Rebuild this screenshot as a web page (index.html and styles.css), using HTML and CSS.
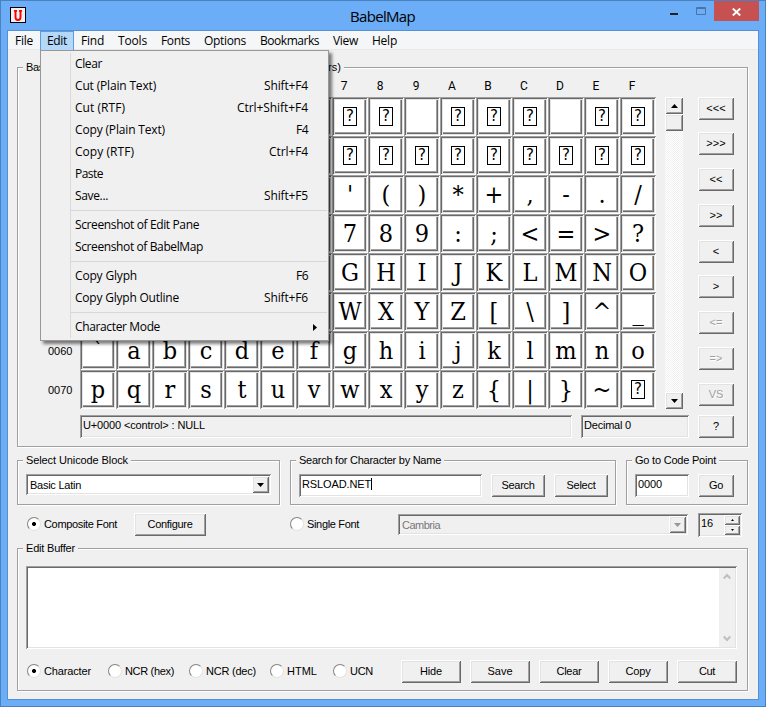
FILE: index.html
```html
<!DOCTYPE html>
<html lang="en">
<head>
<meta charset="utf-8">
<title>BabelMap</title>
<link rel="stylesheet" href="styles.css">
</head>
<body>
<div class="window">
  <header class="titlebar">
    <span class="app-icon"><svg width="10" height="11" viewBox="0 0 10 11"><path d="M1 .9H4M6 .9h3M2.500 1v6c0 2 1 3 2.500 3s2.500-1 2.500-3V1" fill="none" stroke="#f00" stroke-width="1.900"/></svg></span>
    <h1><span data-w="65">BabelMap</span></h1>
    <div class="controls">
      <svg width="44" height="20" viewBox="0 0 44 20"><path d="M0 12h8v2H0z" fill="#222"/><path d="M26.5 6.5h9v7h-9zM26 7.5h10" fill="none" stroke="#4a74a6"/></svg>
      <span class="close"><svg width="9" height="8" viewBox="0 0 9 8"><path d="M.8.5 8.2 7.5M8.2.5.8 7.5" stroke="#fff" stroke-width="1.9"/></svg></span>
    </div>
  </header>
  <main class="client">
    <nav class="menubar">
      <span data-w="18">File</span><span class="open" data-w="20">Edit</span><span data-w="23">Find</span><span data-w="29">Tools</span><span data-w="29">Fonts</span><span data-w="42">Options</span><span data-w="59">Bookmarks</span><span data-w="25">View</span><span data-w="25">Help</span>
    </nav>
    <div class="menu">
      <div><b data-w="27">Clear</b></div>
      <div><b data-w="81">Cut (Plain Text)</b><i data-w="44">Shift+F4</i></div>
      <div><b data-w="50">Cut (RTF)</b><i data-w="71">Ctrl+Shift+F4</i></div>
      <div><b data-w="90">Copy (Plain Text)</b><i data-w="12">F4</i></div>
      <div><b data-w="59">Copy (RTF)</b><i data-w="39">Ctrl+F4</i></div>
      <div><b data-w="28">Paste</b></div>
      <div><b data-w="33">Save...</b><i data-w="44">Shift+F5</i></div>
      <hr>
      <div><b data-w="124">Screenshot of Edit Pane</b></div>
      <div><b data-w="128">Screenshot of BabelMap</b></div>
      <hr>
      <div><b data-w="62">Copy Glyph</b><i data-w="12">F6</i></div>
      <div><b data-w="104">Copy Glyph Outline</b><i data-w="44">Shift+F6</i></div>
      <hr>
      <div><b data-w="85">Character Mode</b><svg class="sub" width="4" height="7" viewBox="0 0 4 7"><path d="M0 0 4 3.5 0 7z"/></svg></div>
    </div>

    <section class="group map">
      <span class="legend split"><span data-w="18">Bas</span><span data-w="13">rs)</span></span>
      <div class="heads"></div>
      <div class="map-body">
        <div class="map-left">
          <div class="board">
            <div class="rows"></div>
            <div class="cells"></div>
            <div class="scroll">
              <span class="sbtn"><svg width="7" height="4" viewBox="0 0 7 4"><path d="M0 4 3.5 0 7 4z"/></svg></span>
              <span class="thumb"></span>
              <span class="sbtn end"><svg width="7" height="4" viewBox="0 0 7 4"><path d="M0 0 3.5 4 7 0z"/></svg></span>
            </div>
          </div>
          <div class="status">
            <div class="sunk name"><span data-w="122">U+0000 &lt;control&gt; : NULL</span></div>
            <div class="sunk dec"><span data-w="47">Decimal 0</span></div>
          </div>
        </div>
        <div class="side">
          <button>&lt;&lt;&lt;</button><button>&gt;&gt;&gt;</button><button>&lt;&lt;</button><button>&gt;&gt;</button><button>&lt;</button><button>&gt;</button><button class="off">&lt;=</button><button class="off">=&gt;</button><button class="off">VS</button><button>?</button>
        </div>
      </div>
    </section>

    <div class="mid">
      <section class="group block">
        <span class="legend"><span data-w="102">Select Unicode Block</span></span>
        <div class="sunk combo"><span data-w="51">Basic Latin</span><span class="sbtn"><svg width="7" height="4" viewBox="0 0 7 4"><path d="M0 0 3.5 4 7 0z"/></svg></span></div>
      </section>
      <section class="group search">
        <span class="legend"><span data-w="142">Search for Character by Name</span></span>
        <div class="line">
          <div class="sunk field"><span class="caret" data-w="69">RSLOAD.NET</span></div>
          <button class="w54"><span data-w="33">Search</span></button>
          <button class="w54"><span data-w="29">Select</span></button>
        </div>
      </section>
      <section class="group goto">
        <span class="legend"><span data-w="81">Go to Code Point</span></span>
        <div class="line">
          <div class="sunk field"><span data-w="24">0000</span></div>
          <button class="w36"><span data-w="14">Go</span></button>
        </div>
      </section>
    </div>

    <div class="fonts">
      <label class="radio on f1"><span data-w="73">Composite Font</span></label>
      <button class="w72"><span data-w="45">Configure</span></button>
      <label class="radio f2"><span data-w="52">Single Font</span></label>
      <div class="sunk combo dis"><span data-w="38">Cambria</span><span class="sbtn"><svg width="7" height="4" viewBox="0 0 7 4"><path d="M0 0 3.5 4 7 0z"/></svg></span></div>
      <div class="sunk spin"><span data-w="12">16</span><div><span class="sbtn"><svg width="3" height="2" viewBox="0 0 3 2"><path d="M0 2 1.5 0 3 2z"/></svg></span><span class="sbtn"><svg width="3" height="2" viewBox="0 0 3 2"><path d="M0 0 1.5 2 3 0z"/></svg></span></div></div>
    </div>

    <section class="group edit">
      <span class="legend"><span data-w="49">Edit Buffer</span></span>
      <div class="sunk area">
        <div class="vbar">
          <svg width="8" height="7" viewBox="0 0 8 7"><path d="M.7 5.5 4 2l3.300 3.500" fill="none" stroke="#bfbfbf" stroke-width="2.200"/></svg>
          <svg width="8" height="7" viewBox="0 0 8 7"><path d="M.7 1.500 4 5l3.300-3.500" fill="none" stroke="#bfbfbf" stroke-width="2.200"/></svg>
        </div>
      </div>
      <div class="modes">
        <div class="radios">
          <label class="radio on"><span data-w="47">Character</span></label>
          <label class="radio"><span data-w="49">NCR (hex)</span></label>
          <label class="radio"><span data-w="50">NCR (dec)</span></label>
          <label class="radio"><span data-w="30">HTML</span></label>
          <label class="radio"><span data-w="23">UCN</span></label>
        </div>
        <button><span data-w="22">Hide</span></button><button><span data-w="25">Save</span></button><button><span data-w="25">Clear</span></button><button><span data-w="25">Copy</span></button><button><span data-w="16">Cut</span></button>
      </div>
    </section>
  </main>
</div>
<script src="main.js"></script>
</body>
</html>
```
FILE: styles.css
```css
* { box-sizing: border-box; }
body { margin: 0; font: 11px/13px "Liberation Sans", Arial, sans-serif; color: #000; }
svg { display: block; }
[data-w] { white-space: pre; }

.window { width: 766px; height: 707px; background: #6badf6; border: 1px solid #4a82c0; padding: 0 6px 6px; }
.titlebar { height: 29px; display: flex; position: relative; }
.app-icon { width: 16px; height: 16px; margin: 6px 0 0 3px; border: 1px solid #000; background: #f0f0f0; display: grid; place-items: center; }
h1 { margin: 0; width: 731px; text-align: center; font: 15px/20px "Open Sans", sans-serif; position: absolute; left: 10px; top: 5px; }
.controls { margin-left: auto; display: flex; }
.close { width: 45px; height: 20px; background: #c75050; display: grid; place-items: center; padding-top: 1px; }

.client { width: 752px; height: 670px; background: #f0f0f0; border: 1px solid #5590d4; position: relative; }
.menubar { height: 19px; background: #f5f6f7; border-bottom: 1px solid #e8e8e8; display: flex; font: 12px/18px "Open Sans", sans-serif; }
.menubar > span { padding: 0 7px; height: 19px; line-height: 20px; }
.menubar .open { padding: 0 6px; background: #b5d7f8; border: 1px solid #5c9ddb; line-height: 18px; height: 20px; border-bottom-color: #999; }
.menu { position: absolute; left: 32px; top: 19px; width: 289px; height: 291px; background: linear-gradient(90deg, transparent 29px, #d9d9d9 29px 30px, transparent 30px) no-repeat 0 2px / 100% 285px #f0f0f0; border: 1px solid #989898; padding: 2px 0; font: 12px/22px "Open Sans", sans-serif; box-shadow: 3px 3px 3px rgba(0,0,0,.5); z-index: 2; }
.menu div { height: 22px; padding: 0 20px 0 34px; display: flex; justify-content: space-between; }
.menu b, .menu i { font: inherit; }
.menu hr { height: 1px; border: 0; margin: 3px 1px 3px 30px; background: #d7d7d7; }
.menu .sub { margin: 8px -9px 0 0; }

.group { border: 1px solid #a0a0a0; box-shadow: 1px 1px #fff, inset 1px 1px #fff; }
.legend { display: block; width: max-content; height: 15px; line-height: 15px; margin: -8px 0 0 5px; padding: 0 3px; background: #f0f0f0; }
.legend.split { display: flex; justify-content: space-between; width: 321px; }
.sunk { background: #fff; box-shadow: inset 1px 1px #a0a0a0, inset -1px -1px #fff, inset 2px 2px #696969, inset -2px -2px #e3e3e3; }
button, .sbtn, .thumb { display: grid; place-items: center; padding: 0; border: 0; background: #f0f0f0; font: inherit; color: #000; box-shadow: inset 1px 1px #fff, inset -1px -1px #696969, inset 2px 2px #e3e3e3, inset -2px -2px #a0a0a0; }
button { height: 23px; width: 60px; }
.w36 { width: 36px; } .w54 { width: 54px; } .w72 { width: 72px; }

.map { width: 731px; height: 380px; margin: 17px 0 0 9px; }
.heads { display: grid; grid-template-columns: repeat(9, 36px); height: 22px; line-height: 22px; margin-left: 311px; text-align: center; font-size: 12px; font-family: Roboto, sans-serif; }
.heads span { padding-right: 6px; }
.map-body { display: flex; gap: 9px; margin-left: 28px; }
.map-left { width: 643px; }
.board { display: flex; height: 312px; }
.rows { width: 34px; padding-top: 234px; }
.rows span { display: block; height: 39px; line-height: 41px; padding-left: 2px; font-size: 11px; }
.cells { display: grid; grid-template-columns: repeat(16, 36px); grid-auto-rows: 39px; }
.cell { background: #fff; box-shadow: inset 1px 1px #a0a0a0, inset -1px -1px #fff, inset 2px 2px #696969, inset -2px -2px #e3e3e3, inset 3px 3px #e3e3e3, inset -3px -3px #696969, inset -4px -4px #a0a0a0; text-align: center; font: 25px/40px "DejaVu Serif Condensed", "DejaVu Serif", serif; font-stretch: condensed; overflow: hidden; }
.missing { display: block; width: 14px; height: 19px; margin: 10px auto 0; border: 1px solid #000; font: 15px/17px "DejaVu Sans", sans-serif; }
.scroll { width: 18px; margin-left: 9px; display: flex; flex-direction: column; background: repeating-conic-gradient(#fff 0 25%, #f0f0f0 0 50%) 0 0 / 2px 2px; }
.scroll .sbtn { height: 17px; }
.scroll .thumb { height: 17px; }
.scroll .end { margin-top: auto; }
.status { display: flex; gap: 9px; margin: 6px 0 0 34px; }
.status .sunk { height: 23px; padding: 4px 3px; background: #f0f0f0; }
.name { width: 492px; } .dec { width: 108px; }
.side { display: grid; grid-template-rows: 35px 36px 36px 36px 35px 36px 36px 36px 32px 23px; }
.side button { width: 36px; }
.off { color: #a0a0a0; text-shadow: 1px 1px #fff; }

.mid { display: flex; margin: 13px 0 0 9px; height: 45px; }
.block { width: 263px; } .search { width: 326px; margin-left: 10px; } .goto { width: 122px; margin-left: 10px; }
.combo { display: flex; justify-content: space-between; height: 21px; padding: 2px 2px 2px 4px; line-height: 19px; }
.combo .sbtn { width: 17px; height: 17px; }
.block .combo { width: 245px; margin: 6px 0 0 8px; }
.line { display: flex; margin: 6px 0 0 8px; }
.field { height: 23px; padding: 4px 3px; }
.search .field { width: 183px; } .search button { margin-left: 9px; }
.goto .field { width: 54px; } .goto button { margin-left: 9px; }
.caret { box-shadow: 1px 0 #000; }

.fonts { display: flex; margin-top: 8px; height: 23px; padding-left: 19px; }
.radio { display: flex; align-items: center; height: 23px; }
.radio::before { content: ""; width: 12px; height: 12px; margin-right: 3px; border-radius: 50%; background: #fff; border: 1.5px solid; border-color: #858585 #e3e3e3 #e3e3e3 #858585; flex: none; margin-top: -2px; }
.radio.on::before { background: radial-gradient(circle, #000 0 1.700px, #fff 2.300px); }
.f1 { width: 107px; } .f2 { width: 108px; margin-left: 84px; }
.fonts .combo { width: 290px; margin-top: 1px; background: #f0f0f0; color: #787878; fill: #969696; }
.spin { width: 44px; margin-left: 10px; padding: 2px 2px 2px 3px; background: #f0f0f0; display: flex; justify-content: space-between; line-height: 17px; height: 24px; }
.spin .sbtn { width: 16px; height: 10px; }

.edit { width: 731px; height: 143px; margin: 12px 0 0 9px; }
.area { width: 711px; height: 83px; margin: 10px 0 0 8px; padding: 2px; display: flex; justify-content: flex-end; }
.vbar { width: 16px; background: #f0f0f0; display: flex; flex-direction: column; justify-content: space-between; align-items: center; padding: 5px 0; }
.modes { display: flex; margin: 11px 0 0 9px; gap: 9px; }
.radios { display: grid; grid-template-columns: 81px 81px 81px 63px 59px; }
```
FILE: main.js
```js
// Build the column headings, row labels and the 8 x 16 character grid.
const heads = document.querySelector('.heads');
const rows = document.querySelector('.rows');
const cells = document.querySelector('.cells');

function add(parent, cls, text) {
  const el = document.createElement('span');
  if (cls) el.className = cls;
  el.textContent = text;
  parent.appendChild(el);
  return el;
}

// Cells behind the open menu carry no glyph; only the exposed ones are filled.
for (let c = 7; c < 16; c++) add(heads, '', c.toString(16).toUpperCase());
for (let r = 0; r < 8; r++) {
  if (r > 5) add(rows, '', '00' + r + '0');
  for (let c = 0; c < 16; c++) {
    const code = r * 16 + c;
    if (code === 9 || code === 13 || (r < 6 && c < 7)) add(cells, 'cell', '');
    else if (code < 32 || code === 127) add(add(cells, 'cell', ''), 'missing', '?');
    else add(cells, 'cell', String.fromCharCode(code));
  }
}

// Track each caption to its designed width.
document.querySelectorAll('[data-w]').forEach(el => {
  const range = document.createRange();
  range.selectNodeContents(el);
  const gap = (el.dataset.w - range.getBoundingClientRect().width) / el.textContent.length;
  el.style.letterSpacing = gap.toFixed(3) + 'px';
});
```
